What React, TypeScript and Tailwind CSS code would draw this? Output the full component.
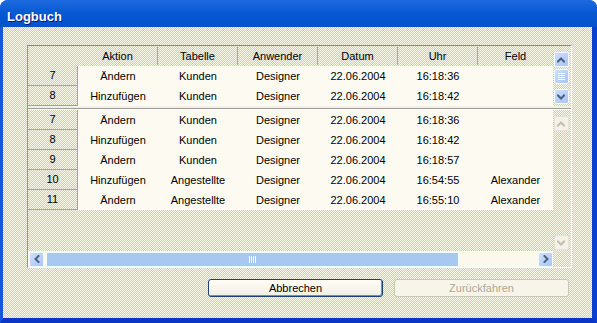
import React from "react";

const FONT = "font-['Liberation_Sans',Arial,sans-serif]";
const DITHER =
  "bg-[conic-gradient(#c2d5ab_25%,#fbf8eb_0_50%,#c2d5ab_0_75%,#fbf8eb_0)] bg-[length:2px_2px]";

type Row = [string, string, string, string, string, string, string];

const upperRows: Row[] = [
  ["7", "Ändern", "Kunden", "Designer", "22.06.2004", "16:18:36", ""],
  ["8", "Hinzufügen", "Kunden", "Designer", "22.06.2004", "16:18:42", ""],
];

const lowerRows: Row[] = [
  ["7", "Ändern", "Kunden", "Designer", "22.06.2004", "16:18:36", ""],
  ["8", "Hinzufügen", "Kunden", "Designer", "22.06.2004", "16:18:42", ""],
  ["9", "Ändern", "Kunden", "Designer", "22.06.2004", "16:18:57", ""],
  ["10", "Hinzufügen", "Angestellte", "Designer", "22.06.2004", "16:54:55", "Alexander"],
  ["11", "Ändern", "Angestellte", "Designer", "22.06.2004", "16:55:10", "Alexander"],
];

const headers = ["Aktion", "Tabelle", "Anwender", "Datum", "Uhr", "Feld"];

const arrows: Record<string, string> = {
  up: "M1 5.5 L4 2.5 L7 5.5",
  down: "M1 2.5 L4 5.5 L7 2.5",
  left: "M5.5 1 L2.5 4 L5.5 7",
  right: "M2.5 1 L5.5 4 L2.5 7",
};

function ScrollBtn({ dir, disabled = false }: { dir: string; disabled?: boolean }) {
  return (
    <div
      className={
        disabled
          ? "w-[15px] h-[15px] rounded-[2px] border border-[#e6e3d6] bg-[#f4f2e8] flex items-center justify-center"
          : "w-[15px] h-[15px] rounded-[2px] border border-[#f4f8ff] bg-gradient-to-br from-[#cfe0fb] to-[#a9c5f2] flex items-center justify-center"
      }
    >
      <svg width="8" height="8" viewBox="0 0 8 8">
        <path
          d={arrows[dir]}
          fill="none"
          stroke={disabled ? "#c3c0af" : "#4d6185"}
          strokeWidth="2"
          strokeLinecap="square"
        />
      </svg>
    </div>
  );
}

function DataRow({ row }: { row: Row }) {
  const widths = ["w-[80px]", "w-[80px]", "w-[80px]", "w-[80px]", "w-[80px]", "w-[75px]"];
  return (
    <div className="flex h-[20px]">
      <div className={`w-[50px] shrink-0 ${DITHER} border-r border-b border-[#a3a3a3] flex items-center justify-center`}>
        {row[0]}
      </div>
      {row.slice(1).map((cell, i) => (
        <div key={i} className={`${widths[i]} shrink-0 bg-[#fdfbf1] flex items-center justify-center whitespace-nowrap`}>
          {cell}
        </div>
      ))}
    </div>
  );
}

export default function App() {
  return (
    <div className={`w-[597px] h-[323px] flex flex-col overflow-hidden rounded-t-[8px] bg-[#0a52d4] ${FONT}`}>
      {/* Title bar */}
      <div className="h-[27px] shrink-0 bg-gradient-to-b from-[#1d6ae0] via-[#0558d2] to-[#0452cc] pl-[7px] pt-[9px]">
        <div className="text-[13px] leading-[15px] font-bold text-white [text-shadow:1px_1px_#0a1a6e]">Logbuch</div>
      </div>

      {/* Body */}
      <div className={`flex-1 border-l-[3px] border-r-[5px] border-b-[5px] border-l-[#1556dc] border-r-[#0a3fcf] border-b-[#0b35c4] ${DITHER} flex flex-col pl-[24px] pt-[18px]`}>
        {/* Grid frame */}
        <div className="w-[545px] border border-t-[#8a8a8e] border-l-[#95939b] border-r-[#fffef6] border-b-[#fffef6] text-[11px] text-black flex flex-col">
          {/* Upper pane */}
          <div className="flex h-[60px]">
            <div className="w-[525px] flex flex-col">
              <div className="flex h-[20px]">
                <div className="w-[50px] shrink-0" />
                {headers.map((h, i) => (
                  <div
                    key={h}
                    className={
                      i < 5
                        ? "w-[80px] shrink-0 flex items-center justify-center border-r border-[#a6a6a6] my-[1px]"
                        : "w-[75px] shrink-0 flex items-center justify-center"
                    }
                  >
                    {h}
                  </div>
                ))}
              </div>
              {upperRows.map((r, i) => (
                <DataRow key={i} row={r} />
              ))}
            </div>
            <div className="w-[16px] flex flex-col items-center pt-[6px]">
              <ScrollBtn dir="up" />
              <div className="mt-[2px] w-[15px] h-[15px] rounded-[2px] border border-[#f4f8ff] bg-gradient-to-br from-[#cfe0fb] to-[#a9c5f2] flex flex-col items-center justify-center gap-[1px]">
                <div className="w-[7px] h-[1px] bg-white" />
                <div className="w-[7px] h-[1px] bg-white" />
                <div className="w-[7px] h-[1px] bg-white" />
                <div className="w-[7px] h-[1px] bg-white" />
              </div>
              <div className="mt-[5px]">
                <ScrollBtn dir="down" />
              </div>
            </div>
            <div className="w-[2px]" />
          </div>

          {/* Pane splitter */}
          <div className="h-[4px] flex flex-col">
            <div className="h-[2px] bg-[#f3f1e6]" />
            <div className="h-[1px] bg-[#9c9c9c]" />
            <div className="h-[1px] bg-[#fdfbf1]" />
          </div>

          {/* Lower pane */}
          <div className="flex h-[141px]">
            <div className="w-[525px] flex flex-col">
              {lowerRows.map((r, i) => (
                <DataRow key={i} row={r} />
              ))}
            </div>
            <div className="w-[16px] flex flex-col items-center justify-between pt-[6px] pb-[1px]">
              <ScrollBtn dir="up" disabled />
              <ScrollBtn dir="down" disabled />
            </div>
            <div className="w-[2px]" />
          </div>

          {/* Horizontal scrollbar */}
          <div className="flex h-[16px]">
            <div className="w-[525px] bg-[#fbf9ee] flex items-center pl-[1px]">
              <ScrollBtn dir="left" />
              <div className="ml-[2px] w-[413px] h-[15px] rounded-[2px] border border-[#f6f9ff] bg-[#a8c8f0] flex items-center justify-center gap-[1px]">
                <div className="w-[1px] h-[7px] bg-white" />
                <div className="w-[1px] h-[7px] bg-white" />
                <div className="w-[1px] h-[7px] bg-white" />
                <div className="w-[1px] h-[7px] bg-white" />
              </div>
              <div className="flex-1" />
              <ScrollBtn dir="right" />
            </div>
          </div>
        </div>

        {/* Buttons */}
        <div className="w-[545px] flex justify-end gap-[11px] pr-[3px] mt-[11px] text-[11px]">
          <button className="w-[175px] h-[18px] rounded-[3px] border border-[#1f3f7a] bg-gradient-to-b from-[#fffdf6] to-[#f2efe2] text-black leading-none shadow-[inset_-1px_-1px_#6d8fc4]">
            Abbrechen
          </button>
          <button className="w-[175px] h-[18px] rounded-[3px] border border-[#cac7b7] bg-[#f7f5ea] text-[#aca899] leading-none">
            Zurückfahren
          </button>
        </div>
      </div>
    </div>
  );
}
